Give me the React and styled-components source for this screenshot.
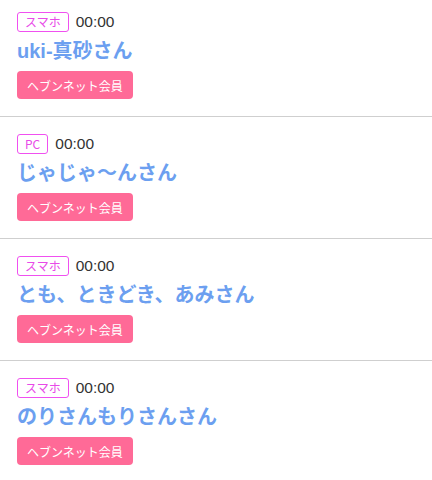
import React from "react";
import styled, { createGlobalStyle } from "styled-components";

const Global = createGlobalStyle`
  html, body { margin: 0; padding: 0; background: #fff; }
  body { font-family: "Liberation Sans", "Noto Sans CJK JP", sans-serif; }
`;

const List = styled.ul`
  list-style: none;
  margin: 0;
  padding: 0;
`;

const Item = styled.li`
  padding: ${(p) => (p.$first ? "12px" : "17px")} 17px 17px;
  border-bottom: 1px solid #cfcfcf;
`;

const Meta = styled.div`
  display: flex;
  align-items: center;
  gap: 7px;
  height: 20px;
`;

const Device = styled.span`
  box-sizing: border-box;
  height: 20px;
  padding: 0 7px;
  display: inline-flex;
  align-items: center;
  border: 1px solid #f050f0;
  border-radius: 3px;
  color: #e84ae8;
  font-size: 12px;
  font-family: "Noto Sans CJK JP", sans-serif;
  line-height: 1;
`;

const Time = styled.span`
  font-size: 15.5px;
  color: #333;
  line-height: 20px;
`;

const Name = styled.div`
  margin: 5px 0 6px;
  font-size: 20px;
  line-height: 28px;
  font-weight: bold;
  color: #6c9ff0;
  font-family: "Liberation Sans", "Noto Sans CJK JP", sans-serif;
`;

const Tag = styled.span`
  box-sizing: border-box;
  display: inline-flex;
  align-items: center;
  height: 28px;
  padding: 0 10px;
  border-radius: 4px;
  background: #ff6a97;
  color: #fff;
  font-size: 12px;
  font-family: "Noto Sans CJK JP", sans-serif;
`;

const data = [
  { device: "スマホ", time: "00:00", name: "uki-真砂さん" },
  { device: "PC", time: "00:00", name: "じゃじゃ〜んさん" },
  { device: "スマホ", time: "00:00", name: "とも、ときどき、あみさん" },
  { device: "スマホ", time: "00:00", name: "のりさんもりさんさん" },
];

export default function App() {
  return (
    <>
      <Global />
      <List>
        {data.map((d, i) => (
          <Item key={i} $first={i === 0}>
            <Meta>
              <Device>{d.device}</Device>
              <Time>{d.time}</Time>
            </Meta>
            <Name>{d.name}</Name>
            <Tag>ヘブンネット会員</Tag>
          </Item>
        ))}
      </List>
    </>
  );
}
